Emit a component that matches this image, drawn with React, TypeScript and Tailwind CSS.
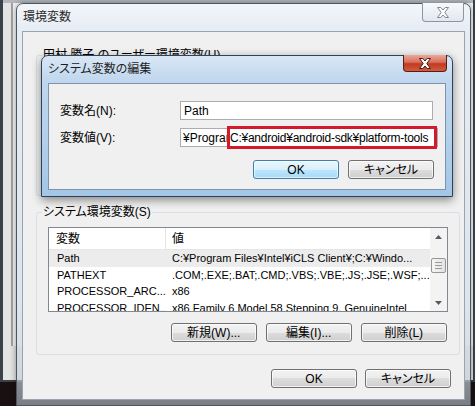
import React from 'react';

const ui = "font-['Liberation_Sans','Noto_Sans_CJK_JP',sans-serif] [font-feature-settings:'palt']";

const rows = [
  { name: 'Path', value: 'C:¥Program Files¥Intel¥iCLS Client¥;C:¥Windo...', selected: true },
  { name: 'PATHEXT', value: '.COM;.EXE;.BAT;.CMD;.VBS;.VBE;.JS;.JSE;.WSF;...', selected: false },
  { name: 'PROCESSOR_ARC...', value: 'x86', selected: false },
  { name: 'PROCESSOR_IDEN...', value: 'x86 Family 6 Model 58 Stepping 9, GenuineIntel', selected: false },
];

function CloseGlyph({ stroke }: { stroke: string }) {
  return (
    <svg width="14" height="11" viewBox="0 0 14 11">
      <polygon
        points="1.5,0.5 4.8,0.5 7,3 9.2,0.5 12.5,0.5 8.8,5.5 12.5,10.5 9.2,10.5 7,8 4.8,10.5 1.5,10.5 5.2,5.5"
        fill="#fff"
        stroke={stroke}
        strokeWidth="1"
        strokeLinejoin="round"
      />
    </svg>
  );
}

function Button({ label, primary = false }: { label: string; primary?: boolean }) {
  return (
    <div
      className={
        primary
          ? 'w-[86px] h-[19px] rounded-[3px] border border-[#3c7fb1] bg-[linear-gradient(#eaf6fd_0%,#d9f0fc_50%,#bee6fd_50%,#a7d9f5_100%)] shadow-[inset_0_0_0_1px_rgba(255,255,255,0.6)] flex items-center justify-center text-[12px] text-black'
          : 'w-[86px] h-[19px] rounded-[3px] border border-[#707070] bg-[linear-gradient(#f2f2f2_0%,#ebebeb_50%,#dddddd_50%,#cfcfcf_100%)] shadow-[inset_0_0_0_1px_rgba(255,255,255,0.7)] flex items-center justify-center text-[12px] text-black'
      }
    >
      {label}
    </div>
  );
}

function Arrow({ up }: { up: boolean }) {
  return (
    <svg width="7" height="4" viewBox="0 0 7 4">
      <polygon points={up ? '0,4 7,4 3.5,0' : '0,0 7,0 3.5,4'} fill="#5a5a5a" />
    </svg>
  );
}

function ListView() {
  return (
    <div className="h-[85px] border border-[#828790] bg-white flex overflow-hidden">
      <div className="flex-1 min-w-0 flex flex-col">
        <div className="h-[22px] shrink-0 flex border-b border-[#e5e5e5] text-[12px] text-black">
          <div className="w-[117px] shrink-0 pl-[7px] flex items-center border-r border-[#e5e5e5]">変数</div>
          <div className="flex-1 pl-[6px] flex items-center">値</div>
        </div>
        {rows.map((r) => (
          <div
            key={r.name}
            className={
              r.selected
                ? 'h-[16.5px] shrink-0 flex items-center bg-[#ececec] text-[11px] text-black'
                : 'h-[16.5px] shrink-0 flex items-center text-[11px] text-black'
            }
          >
            <div className="w-[117px] shrink-0 pl-[8px] whitespace-nowrap overflow-hidden">{r.name}</div>
            <div className="flex-1 pl-[6px] whitespace-nowrap overflow-hidden">{r.value}</div>
          </div>
        ))}
      </div>
      <div className="w-[17px] shrink-0 bg-[#f3f3f3] flex flex-col">
        <div className="h-[17px] flex items-center justify-center">
          <Arrow up />
        </div>
        <div className="mt-[13px] mx-[1px] h-[15px] rounded-[2px] border border-[#979797] bg-[linear-gradient(90deg,#f5f5f5,#e2e2e2)] flex flex-col items-center justify-center gap-[2px]">
          <div className="w-[7px] h-[1px] bg-[#9a9a9a]" />
          <div className="w-[7px] h-[1px] bg-[#9a9a9a]" />
          <div className="w-[7px] h-[1px] bg-[#9a9a9a]" />
        </div>
        <div className="flex-1" />
        <div className="h-[17px] flex items-center justify-center">
          <Arrow up={false} />
        </div>
      </div>
    </div>
  );
}

export default function App() {
  return (
    <div className={`relative w-[475px] h-[406px] overflow-hidden bg-[#1a1012] ${ui}`}>
      {/* back window: システムのプロパティ */}
      <div className="absolute left-0 top-0 w-[475px] h-[382px] bg-[#3b424a] flex flex-col pl-[3px] pr-[2px] pb-[2px]">
        <div className="h-[3px] shrink-0 bg-[#b4b8bd]" />
        <div className="flex-1 bg-[#e4e4e4] pl-[8px] flex flex-col">
          <div className="h-[343px] border-l-2 border-[#a2a2a2] bg-[#f6f6f6]" />
        </div>
      </div>

      {/* 環境変数 window */}
      <div className="absolute left-[16px] top-[3px] w-[455px] h-[403px] rounded-t-[7px] border border-[#4b5663] bg-[linear-gradient(180deg,rgba(242,246,250,0.97)_0px,rgba(228,235,243,0.92)_28px,rgba(216,225,235,0.85)_300px,rgba(190,198,208,0.6)_100%)] shadow-[0_0_6px_rgba(0,0,0,0.4)] flex flex-col px-[5px] pb-[5px]">
        <div className="h-[27px] shrink-0 flex justify-between items-start">
          <span className="pl-[1px] pt-[5px] text-[12px] leading-[16px] text-[#2a2a2a]">環境変数</span>
          <div className="mr-[1px] mt-[-1px] w-[42px] h-[19px] rounded-b-[4px] border border-t-0 border-[#8a96a4] bg-[linear-gradient(#f7f9fb,#e2e8ef)] flex items-center justify-center">
            <CloseGlyph stroke="#7d8794" />
          </div>
        </div>
        <div className="flex-1 bg-[#f0f0f0] border border-[#9aa4b0] flex flex-col pl-[13px] pr-[11px]">
          <fieldset className="mt-[15px] h-[149px] border border-[#d5dfe5] rounded-[3px]">
            <legend className="ml-[5px] px-[1px] text-[12px] leading-[16px] text-black">田村 勝子 のユーザー環境変数(U)</legend>
          </fieldset>
          <fieldset className="mt-[8px] border border-[#d5dfe5] rounded-[3px] pt-[7px] pb-[12px] pl-[11px] pr-[11px]">
            <legend className="ml-[-6px] px-[1px] text-[12px] leading-[16px] text-black">システム環境変数(S)</legend>
            <ListView />
            <div className="mt-[11px] flex justify-end gap-[9px] pr-[1px]">
              <Button label="新規(W)..." />
              <Button label="編集(I)..." />
              <Button label="削除(L)" />
            </div>
          </fieldset>
          <div className="mt-[14px] mr-[2px] flex justify-end gap-[8px]">
            <Button label="OK" />
            <Button label="キャンセル" />
          </div>
        </div>
      </div>

      {/* システム変数の編集 dialog */}
      <div className="absolute left-[41px] top-[55px] w-[412px] h-[142px] rounded-t-[7px] border border-[#2f4259] bg-[linear-gradient(180deg,#d9e7f5_0px,#bfd6ee_26px,#b2cfeb_60%,#a3c6e7_100%)] shadow-[0_3px_10px_rgba(0,0,0,0.45)] flex flex-col px-[6px] pb-[6px]">
        <div className="h-[27px] shrink-0 flex justify-between items-start">
          <span className="pt-[5px] text-[12px] leading-[16px] text-[#1e1e1e]">システム変数の編集</span>
          <div className="mr-[-1px] mt-[-1px] w-[44px] h-[17px] rounded-b-[4px] border border-t-0 border-[#5b1c14] bg-[linear-gradient(#eaa899_0%,#d8705b_45%,#c23a20_55%,#d05c40_100%)] flex items-center justify-center">
            <CloseGlyph stroke="#4a1a12" />
          </div>
        </div>
        <div className="flex-1 bg-[#f0f0f0] border border-[#7f93aa] flex flex-col pl-[11px] pr-[12px] pt-[17px]">
          <div className="h-[19px] flex items-center">
            <span className="w-[120px] shrink-0 text-[12px] text-black">変数名(N):</span>
            <div className="flex-1 h-[19px] border border-[#abadb3] bg-white flex items-center pl-[3px] text-[12px] text-black">
              Path
            </div>
          </div>
          <div className="mt-[8px] h-[19px] flex items-center">
            <span className="w-[120px] shrink-0 text-[12px] text-black">変数値(V):</span>
            <div className="flex-1 h-[19px] border border-[#abadb3] bg-white flex items-center pl-[2px] text-[12px] text-black">
              <span className="w-[44px] shrink-0 overflow-hidden whitespace-nowrap">¥Program</span>
              <span className="w-[210px] h-[23px] shrink-0 border-[3px] border-[#d5192b] flex items-center whitespace-nowrap overflow-hidden text-[12px] tracking-[-0.25px]">
                C:¥android¥android-sdk¥platform-tools
              </span>
            </div>
          </div>
          <div className="mt-[13px] mr-[-1px] flex justify-end gap-[9px]">
            <Button label="OK" primary />
            <Button label="キャンセル" />
          </div>
        </div>
      </div>
    </div>
  );
}
